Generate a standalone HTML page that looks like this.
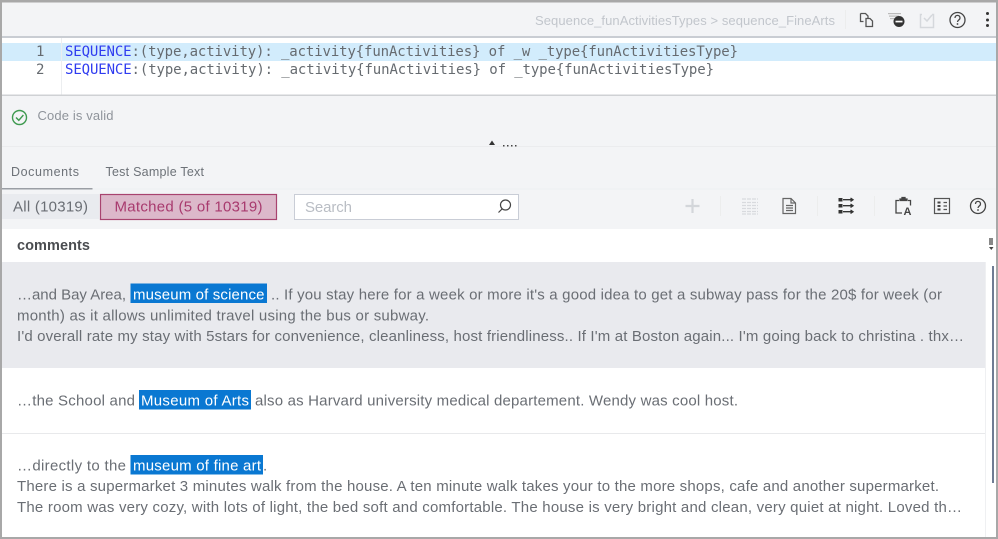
<!DOCTYPE html>
<html><head><meta charset="utf-8"><style>
html,body{margin:0;padding:0;background:#fff}
svg{display:block}
text{font-family:"Liberation Sans",sans-serif;white-space:pre}
.m{font-family:"DejaVu Sans Mono","Liberation Mono",monospace;font-size:14px;fill:#666b70}
.k{fill:#2f3cf0}
.b{font-size:15px;fill:#6a6e74}
.h{font-size:15px;fill:#fff}
.all{filter:blur(.3px)}
</style></head><body>
<svg width="998" height="539" viewBox="0 0 998 539" xmlns="http://www.w3.org/2000/svg">
<rect width="998" height="539" fill="#fff"/>
<g class="all">
<!-- header -->
<rect x="0" y="0" width="998" height="37" fill="#f3f4f6"/>
<rect x="0" y="36" width="998" height="2" fill="#c9cdd3"/>
<text x="535" y="25" font-size="13" fill="#c2c6cc" textLength="300" lengthAdjust="spacing">Sequence_funActivitiesTypes &gt; sequence_FineArts</text>
<line x1="845.500" y1="10" x2="845.500" y2="29" stroke="#eceded"/>
<g fill="none" stroke="#555" stroke-width="1.300">
<path d="M860.500 13.500h5l2.500 2.500v2M860.500 13.500v8h3"/>
<path d="M866 18.500h4l2.500 2.500v5.500H866z"/>
</g>
<g fill="#bbb"><rect x="888" y="13" width="13" height="1.200"/><rect x="889" y="15.500" width="10" height="1.200"/><rect x="890" y="18" width="5" height="1.200"/></g>
<circle cx="899" cy="21.500" r="5.500" fill="#333"/><rect x="895.500" y="20.700" width="7" height="1.700" fill="#fff"/>
<g fill="none" stroke="#d5d8dc" stroke-width="1.500"><path d="M922 14.500h-1.500v13h13v-13H932"/><path d="M924 18l3 3 5-6"/></g>
<g fill="none" stroke="#444" stroke-width="1.300"><circle cx="957.500" cy="20" r="7.500"/><path d="M955 18c0-3.500 5-3.500 5 0 0 2-2.500 2-2.500 4"/></g>
<circle cx="957.500" cy="24" r=".9" fill="#444"/>
<g fill="#333"><circle cx="987.500" cy="13.500" r="1.500"/><circle cx="987.500" cy="20" r="1.500"/><circle cx="987.500" cy="25.500" r="1.500"/></g>
<!-- editor -->
<rect x="2" y="43" width="994" height="18" fill="#d2ecfc"/>
<line x1="61.500" y1="38" x2="61.500" y2="95" stroke="#eceef0"/>
<text x="36" y="56" class="m">1</text>
<text x="36" y="74" class="m">2</text>
<text x="65" y="56" class="m" textLength="673" lengthAdjust="spacing"><tspan class="k">SEQUENCE</tspan>:(type,activity): _activity{funActivities} of _w _type{funActivitiesType}</text>
<text x="65" y="74" class="m" textLength="649" lengthAdjust="spacing"><tspan class="k">SEQUENCE</tspan>:(type,activity): _activity{funActivities} of _type{funActivitiesType}</text>
<!-- status, tabs and toolbar background -->
<rect x="0" y="95" width="998" height="134" fill="#f3f4f6"/>
<rect x="0" y="94.500" width="998" height="1.500" fill="#cfd1d4"/>
<circle cx="19.500" cy="117.500" r="7" fill="none" stroke="#3f9a50" stroke-width="1.400"/>
<path d="M16 117.500l2.800 2.800 4.600-5.300" fill="none" stroke="#3f9a50" stroke-width="1.400"/>
<text x="37.500" y="120" font-size="13" fill="#8f949b" textLength="76" lengthAdjust="spacing">Code is valid</text>
<rect x="0" y="146" width="998" height="1" fill="#ebecee"/>
<path d="M489 145l3-4.500 3 4.500z" fill="#333"/>
<g fill="#444"><rect x="503" y="145" width="1.500" height="1.500"/><rect x="507" y="145" width="1.500" height="1.500"/><rect x="511" y="145" width="1.500" height="1.500"/><rect x="515" y="145" width="1.500" height="1.500"/></g>
<!-- tabs -->
<text x="11" y="176" font-size="12.500" fill="#6d7278" textLength="68" lengthAdjust="spacing">Documents</text>
<text x="105.500" y="176" font-size="12.500" fill="#6d7278" textLength="98.500" lengthAdjust="spacing">Test Sample Text</text>
<rect x="0" y="188" width="92.500" height="1.500" fill="#9a9ea4"/>
<rect x="92.500" y="188.500" width="906" height="1" fill="#eeeff1"/>
<!-- toolbar -->
<rect x="2" y="194" width="97" height="25" fill="#e9ebef"/>
<text x="13" y="211.500" font-size="15" fill="#6a6e74" textLength="75" lengthAdjust="spacing">All (10319)</text>
<rect x="100.500" y="194.500" width="176" height="25" fill="#dcb8ca" stroke="#a8436f" stroke-width="1.200"/>
<text x="114.500" y="211.500" font-size="15" fill="#a83a6e" textLength="148" lengthAdjust="spacing">Matched (5 of 10319)</text>
<rect x="294.500" y="194.500" width="224" height="25" fill="#fff" stroke="#c9cdd6"/>
<text x="305" y="212" font-size="15" fill="#b9bdc4" textLength="47" lengthAdjust="spacing">Search</text>
<g fill="none" stroke="#444" stroke-width="1.200"><circle cx="505.500" cy="205" r="5"/><path d="M502 209l-3.500 3.500"/></g>
<path d="M692.500 199v14M685.500 206h14" stroke="#d3d6da" stroke-width="2.200"/>
<line x1="720.500" y1="196" x2="720.500" y2="216" stroke="#eceded"/>
<g stroke="#d8dade" stroke-width="1.200" stroke-dasharray="4 1"><path d="M742 199h16M742 202.500h16M742 205.500h16M742 208.500h16M742 211.500h16M742 214h16"/></g>
<g fill="none" stroke="#666" stroke-width="1.200"><path d="M783 198.500h8l4.500 4.500v10.500H783z"/><path d="M791 198.500v4.500h4.500M786 205.500h7M786 208h7M786 210.500h7"/></g>
<line x1="817.500" y1="196" x2="817.500" y2="216" stroke="#eceded"/>
<g fill="#333"><rect x="838.500" y="198" width="4" height="3.500"/><rect x="838.500" y="204" width="4" height="3.500"/><rect x="838.500" y="210" width="4" height="3.500"/></g>
<g stroke="#333" stroke-width="1.300" fill="none"><path d="M843 199.700h10M850.500 198l2.500 1.700-2.500 1.700M843 205.700h10M850.500 204l2.500 1.700-2.500 1.700M843 211.700h10M850.500 210l2.500 1.700-2.500 1.700"/></g>
<line x1="874.500" y1="196" x2="874.500" y2="216" stroke="#eceded"/>
<g fill="none" stroke="#444" stroke-width="1.300"><path d="M899 200.500h-3v12.500h6M908 200.500h2.500v5"/><path d="M900 200.500h7v-1.500h-2v-1.500h-3v1.500h-2z" fill="#444"/></g>
<text x="903.500" y="215" font-size="11" font-weight="bold" fill="#444">A</text>
<g fill="none" stroke="#555" stroke-width="1.200"><rect x="934.500" y="198.500" width="15" height="15"/><path d="M943.500 202.500h3.500M943.500 206h3.500M943.500 209.500h3.500"/></g>
<g fill="#444"><rect x="937.500" y="201.500" width="3" height="2"/><rect x="937.500" y="205" width="3" height="2"/><rect x="937.500" y="208.500" width="3" height="2"/></g>
<g fill="none" stroke="#444" stroke-width="1.300"><circle cx="978" cy="206" r="7.500"/><path d="M975.500 204c0-3.500 5-3.500 5 0 0 2-2.500 2-2.500 4"/></g>
<circle cx="978" cy="210" r=".9" fill="#444"/>
<!-- table -->
<rect x="2" y="229" width="994" height="308" fill="#fff"/>
<text x="17" y="250" font-size="14.500" font-weight="bold" fill="#4a4c50" textLength="73" lengthAdjust="spacing">comments</text>
<rect x="989" y="238" width="4" height="7" fill="#888"/><path d="M989 247h4.500l-2.200 3z" fill="#444"/>
<rect x="2" y="262" width="984" height="106" fill="#e9eaee"/>
<line x1="985.500" y1="262" x2="985.500" y2="537" stroke="#eff0f2"/>
<rect x="992" y="266" width="2" height="217" fill="#6f7c94"/>
<line x1="2" y1="433.500" x2="985" y2="433.500" stroke="#e8e9eb"/>

<rect x="130.500" y="283.500" width="136.500" height="19.500" fill="#0a78d2"/>
<rect x="139" y="390" width="112" height="19.500" fill="#0a78d2"/>
<rect x="130.500" y="455" width="132.500" height="19.500" fill="#0a78d2"/>

<text x="17" y="299.500" class="b" textLength="109" lengthAdjust="spacing">…and Bay Area,</text>
<text x="133" y="299.500" class="h" textLength="131.500" lengthAdjust="spacing">museum of science</text>
<text x="271" y="299.500" class="b" textLength="671" lengthAdjust="spacing">.. If you stay here for a week or more it's a good idea to get a subway pass for the 20$ for week (or</text>
<text x="17" y="320.500" class="b" textLength="412" lengthAdjust="spacing">month) as it allows unlimited travel using the bus or subway.</text>
<text x="17" y="341" class="b" textLength="947" lengthAdjust="spacing">I'd overall rate my stay with 5stars for convenience, cleanliness, host friendliness.. If I'm at Boston again... I'm going back to christina . thx…</text>

<text x="17" y="405.500" class="b" textLength="118" lengthAdjust="spacing">…the School and</text>
<text x="141" y="405.500" class="h" textLength="108" lengthAdjust="spacing">Museum of Arts</text>
<text x="255" y="405.500" class="b" textLength="483" lengthAdjust="spacing">also as Harvard university medical departement. Wendy was cool host.</text>

<text x="17" y="470.500" class="b" textLength="109" lengthAdjust="spacing">…directly to the</text>
<text x="133" y="470.500" class="h" textLength="128" lengthAdjust="spacing">museum of fine art</text>
<text x="263" y="470.500" class="b">.</text>
<text x="17" y="491" class="b" textLength="922" lengthAdjust="spacing">There is a supermarket 3 minutes walk from the house. A ten minute walk takes your to the more shops, cafe and another supermarket.</text>
<text x="17" y="512" class="b" textLength="945" lengthAdjust="spacing">The room was very cozy, with lots of light, the bed soft and comfortable. The house is very bright and clean, very quiet at night. Loved th…</text>
</g>
<!-- outer border -->
<rect x="0" y="0" width="998" height="2.500" fill="#a8a8a8"/>
<rect x="0" y="0" width="2" height="539" fill="#a8a8a8"/>
<rect x="996" y="0" width="2" height="539" fill="#a8a8a8"/>
<rect x="0" y="537" width="998" height="2" fill="#a8a8a8"/>
</svg>
</body></html>
